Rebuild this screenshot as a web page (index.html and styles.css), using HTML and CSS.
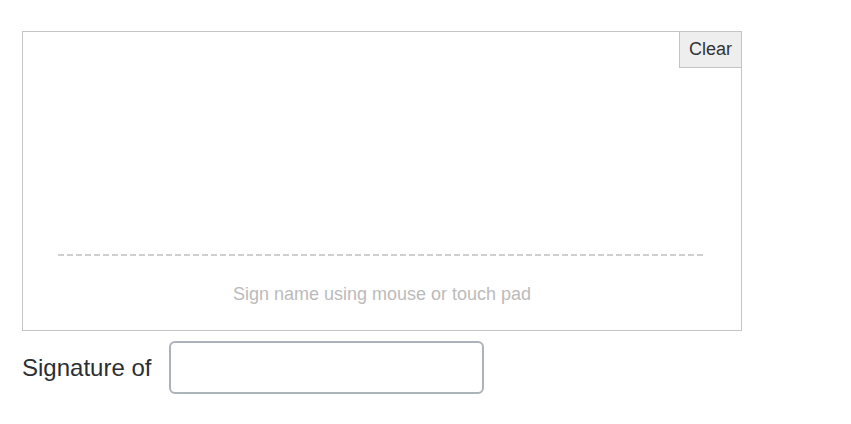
FILE: index.html
```html
<!DOCTYPE html>
<html lang="en">
<head>
    <meta charset="UTF-8">
    <meta name="viewport" content="width=device-width, initial-scale=1.0">
    <title>Signature</title>
    <link rel="stylesheet" href="styles.css">
</head>
<body>
    <!-- Signature pad -->
    <div class="sig-pad">
        <button class="clear-btn">Clear</button>
        <div class="sig-line"></div>
        <p class="sig-hint">Sign name using mouse or touch pad</p>
    </div>

    <div class="sig-row">
        <label for="signer">Signature of</label>
        <input type="text" id="signer">
    </div>
</body>
</html>
```

FILE: styles.css
```css
body {
    font-family: "Liberation Sans", Arial, sans-serif;
    color: #333;
    background-color: #fff;
    margin: 0;
    padding: 31px 22px;
}
.sig-pad {
    position: relative;
    box-sizing: border-box;
    width: 720px;
    height: 300px;
    border: 1px solid #c4c4c4;
    padding-top: 222px;
}
.clear-btn {
    position: absolute;
    top: -1px;
    right: -1px;
    width: 63px;
    height: 37px;
    background-color: #eee;
    border: 1px solid #c4c4c4;
    color: #333;
    font-family: inherit;
    font-size: 18px;
    padding: 0;
    cursor: pointer;
}
.sig-line {
    height: 2px;
    margin: 0 36px 0 35px;
    background: repeating-linear-gradient(to right, #cfcfcf 0 6px, transparent 6px 9px);
}
.sig-hint {
    margin: 28px 0 0;
    text-align: center;
    font-size: 18px;
    color: #bbb;
}
.sig-row {
    display: flex;
    align-items: center;
    gap: 18px;
    margin-top: 10px;
}
.sig-row label {
    font-size: 24px;
    color: #2b2f33;
}
.sig-row input {
    box-sizing: border-box;
    width: 315px;
    height: 53px;
    border: 2px solid #adb3ba;
    border-radius: 6px;
    font-size: 18px;
    padding: 0 10px;
}
```
